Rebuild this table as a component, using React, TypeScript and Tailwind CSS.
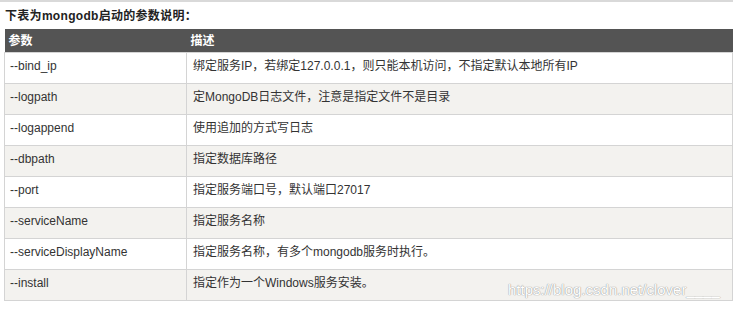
const rows = [
  { param: "--bind_ip", desc: "绑定服务IP，若绑定127.0.0.1，则只能本机访问，不指定默认本地所有IP" },
  { param: "--logpath", desc: "定MongoDB日志文件，注意是指定文件不是目录" },
  { param: "--logappend", desc: "使用追加的方式写日志" },
  { param: "--dbpath", desc: "指定数据库路径" },
  { param: "--port", desc: "指定服务端口号，默认端口27017" },
  { param: "--serviceName", desc: "指定服务名称" },
  { param: "--serviceDisplayName", desc: "指定服务名称，有多个mongodb服务时执行。" },
  { param: "--install", desc: "指定作为一个Windows服务安装。" },
]

export default function App() {
  return (
    <div className="relative w-[741px] h-[313px] bg-white text-[#333] font-['Liberation_Sans','Noto_Sans_CJK_SC',sans-serif] overflow-hidden">
      <div className="h-[2px] w-[733px] bg-[#d9d9d9]" />
      <div className="pl-[5px] pt-[5px] h-[27px] text-[12px] leading-[18px] font-bold text-[#222] tracking-[0.3px]">
        下表为mongodb启动的参数说明：
      </div>

      <table className="ml-[4px] w-[729px] border-collapse text-[12px] leading-[18px]">
        <thead>
          <tr className="h-[23px] bg-[#545454] text-white font-bold text-left">
            <th className="w-[182px] pl-[4px] pt-[1px] align-middle">参数</th>
            <th className="pl-[4px] pt-[1px] align-middle">描述</th>
          </tr>
        </thead>
        <tbody>
          {rows.map((row, i) => (
            <tr key={row.param} className={"h-[31px] " + (i % 2 === 1 ? "bg-[#f3f2ef]" : "bg-white")}>
              <td className="border border-[#d4d4d4] pl-[5px] pb-[3px] align-middle">{row.param}</td>
              <td className="border border-[#d4d4d4] pl-[6px] pb-[3px] align-middle">{row.desc}</td>
            </tr>
          ))}
        </tbody>
      </table>

      <div className="absolute left-[508px] top-[280px] text-[15px] leading-[20px] text-white [text-shadow:0_0_1px_#8a8a8a,0_0_1px_#aaa] whitespace-nowrap">
        https://blog.csdn.net/clover____
      </div>
    </div>
  )
}
